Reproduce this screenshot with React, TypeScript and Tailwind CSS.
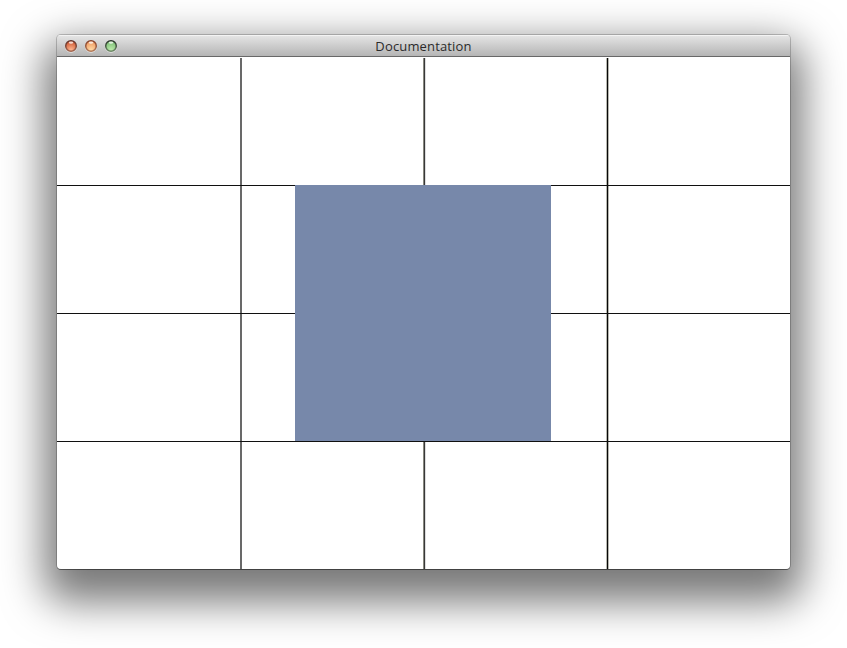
import React from "react";

type LightProps = { id: string; rim: string; dark: string; body: string; glow: string };

function TrafficLight({ id, rim, dark, body, glow }: LightProps) {
  return (
    <svg width="14" height="14" viewBox="0 0 14 14" aria-hidden="true">
      <defs>
        <linearGradient id={`${id}-rim`} x1="0" y1="0" x2="0" y2="1">
          <stop offset="0" stopColor={dark} />
          <stop offset="1" stopColor={rim} />
        </linearGradient>
        <radialGradient id={`${id}-body`} cx="0.5" cy="0.88" r="0.7">
          <stop offset="0" stopColor={glow} />
          <stop offset="1" stopColor={body} />
        </radialGradient>
      </defs>
      <circle cx="7" cy="7.7" r="6.1" fill="#eeeeee" opacity="0.8" />
      <circle cx="7" cy="7" r="5.3" fill={`url(#${id}-body)`} stroke={`url(#${id}-rim)`} strokeWidth="1.5" />
      <ellipse cx="7" cy="3.6" rx="2.2" ry="1.2" fill="#ffffff" opacity="0.75" />
    </svg>
  );
}

function Canvas() {
  return (
    <svg className="block" width="733" height="512" viewBox="0 0 733 512" shapeRendering="crispEdges">
      <rect width="733" height="512" fill="#ffffff" />
      <rect x="183" y="1" width="2" height="511" fill="#696969" />
      <rect x="366" y="1" width="1" height="511" fill="#88887f" />
      <rect x="367" y="1" width="1" height="511" fill="#383838" />
      <rect x="368" y="1" width="1" height="511" fill="#dddddd" />
      <rect x="549" y="1" width="3" height="511" fill="#b8b8b0" />
      <rect x="550" y="1" width="1" height="511" fill="#080808" />
      <rect y="128" width="733" height="1" fill="#101010" />
      <rect y="256" width="733" height="1" fill="#101010" />
      <rect y="384" width="733" height="1" fill="#101010" />
      <rect x="238" y="128" width="256" height="256" fill="#7788aa" />
    </svg>
  );
}

export default function App() {
  return (
    <main className="h-[648px] w-[847px] overflow-hidden bg-white pl-[57px] pt-[35px]">
      <div className="h-[534px] w-[733px] rounded-[10px] shadow-[0_20px_42px_13px_rgba(0,0,0,0.53)]">
        <section className="h-full overflow-hidden rounded-[4px] shadow-[0_0_0_1px_rgba(0,0,0,0.2),0_1px_0_0_rgba(0,0,0,0.35)]">
          <header className="grid h-[22px] grid-cols-[1fr_auto_1fr] items-center border-b border-[#686868] bg-linear-to-b from-[#e6e6e6] to-[#b5b5b5] shadow-[inset_0_1px_0_#f3f3f3]">
            <div className="flex gap-[6px] pl-[7px]">
              <TrafficLight id="close" dark="#5f3028" rim="#a0654f" body="#d5653f" glow="#ffb892" />
              <TrafficLight id="minimize" dark="#843f28" rim="#b07858" body="#f2a26a" glow="#ffdba6" />
              <TrafficLight id="zoom" dark="#262f26" rim="#6c8665" body="#86c57d" glow="#bdebac" />
            </div>
            <h1 className="h-[18px] w-[97px] whitespace-nowrap text-center font-['Open_Sans',sans-serif] text-[13px] leading-[18px] tracking-[0.15px] text-[#2b2b2b]">Documentation</h1>
            <div />
          </header>
          <Canvas />
        </section>
      </div>
    </main>
  );
}
